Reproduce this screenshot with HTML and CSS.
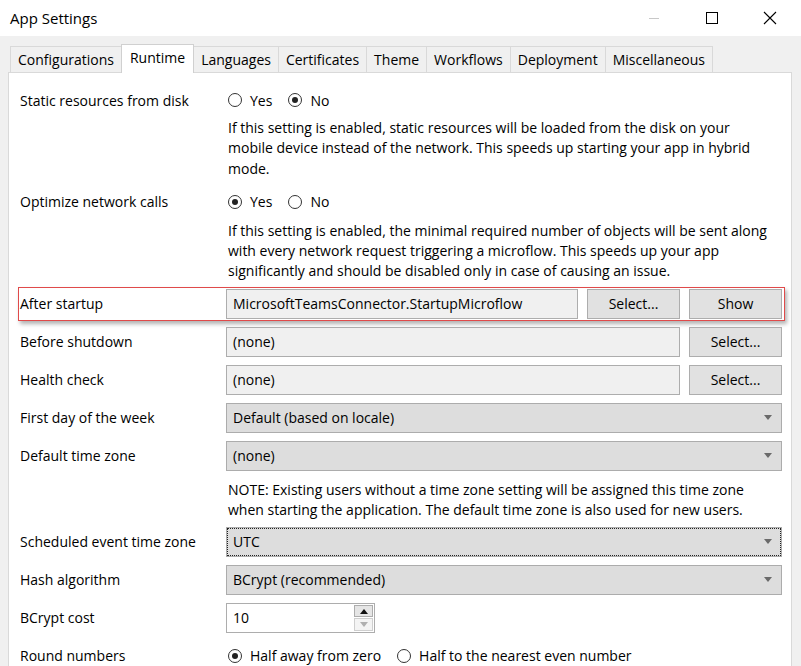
FILE: index.html
```html
<!DOCTYPE html>
<html>
<head>
<meta charset="utf-8">
<title>App Settings</title>
<link rel="stylesheet" href="styles.css">
</head>
<body>
<div class="window">
  <div class="titlebar">
    <span class="title">App Settings</span>
    <div class="winctrls">
      <span class="wbtn"><svg width="12" height="12" viewBox="0 0 12 12"><path d="M1 6.5h10" stroke="#c8c8c8" stroke-width="1"/></svg></span>
      <span class="wbtn"><svg width="12" height="12" viewBox="0 0 12 12"><rect x="0.5" y="0.5" width="11" height="11" fill="none" stroke="#000" stroke-width="1"/></svg></span>
      <span class="wbtn"><svg width="14" height="14" viewBox="0 0 14 14"><path d="M1 1L13 13M13 1L1 13" stroke="#000" stroke-width="1.1"/></svg></span>
    </div>
  </div>

  <div class="tabs">
    <div class="tab">Configurations</div>
    <div class="tab active">Runtime</div>
    <div class="tab">Languages</div>
    <div class="tab">Certificates</div>
    <div class="tab">Theme</div>
    <div class="tab">Workflows</div>
    <div class="tab">Deployment</div>
    <div class="tab">Miscellaneous</div>
  </div>

  <div class="panel">
    <div class="row r-first">
      <div class="label">Static resources from disk</div>
      <div class="radios">
        <span class="radio"><span class="dot"></span>Yes</span>
        <span class="radio checked"><span class="dot"></span>No</span>
      </div>
    </div>
    <div class="desc d-first">If this setting is enabled, static resources will be loaded from the disk on your<br>mobile device instead of the network. This speeds up starting your app in hybrid<br>mode.</div>

    <div class="row r-opt">
      <div class="label">Optimize network calls</div>
      <div class="radios">
        <span class="radio checked"><span class="dot"></span>Yes</span>
        <span class="radio"><span class="dot"></span>No</span>
      </div>
    </div>
    <div class="desc d-opt">If this setting is enabled, the minimal required number of objects will be sent along<br>with every network request triggering a microflow. This speeds up your app<br>significantly and should be disabled only in case of causing an issue.</div>

    <div class="row framed">
      <div class="label">After startup</div>
      <div class="field f-short">MicrosoftTeamsConnector.StartupMicroflow</div>
      <div class="btn">Select...</div>
      <div class="btn">Show</div>
    </div>

    <div class="row r-after-frame">
      <div class="label">Before shutdown</div>
      <div class="field f-long">(none)</div>
      <div class="btn">Select...</div>
    </div>

    <div class="row">
      <div class="label">Health check</div>
      <div class="field f-long">(none)</div>
      <div class="btn">Select...</div>
    </div>

    <div class="row">
      <div class="label">First day of the week</div>
      <div class="select">Default (based on locale)<span class="caret"></span></div>
    </div>

    <div class="row">
      <div class="label">Default time zone</div>
      <div class="select">(none)<span class="caret"></span></div>
    </div>
    <div class="desc d-note">NOTE: Existing users without a time zone setting will be assigned this time zone<br>when starting the application. The default time zone is also used for new users.</div>

    <div class="row r-sched">
      <div class="label">Scheduled event time zone</div>
      <div class="select focused">UTC<span class="caret"></span></div>
    </div>

    <div class="row">
      <div class="label">Hash algorithm</div>
      <div class="select">BCrypt (recommended)<span class="caret"></span></div>
    </div>

    <div class="row">
      <div class="label">BCrypt cost</div>
      <div class="spin">
        <span class="spin-val">10</span>
        <span class="spin-btns">
          <span class="spin-up"><span class="tri-up"></span></span>
          <span class="spin-down"><span class="tri-down"></span></span>
        </span>
      </div>
    </div>

    <div class="row">
      <div class="label">Round numbers</div>
      <div class="radios">
        <span class="radio checked"><span class="dot"></span>Half away from zero</span>
        <span class="radio"><span class="dot"></span>Half to the nearest even number</span>
      </div>
    </div>
  </div>
</div>
</body>
</html>
```

FILE: styles.css
```css
html, body {
  margin: 0;
  padding: 0;
  width: 801px;
  height: 666px;
  overflow: hidden;
}
body {
  background: #f0f0f0;
  font-family: "Open Sans", "Noto Sans", "DejaVu Sans", sans-serif;
  font-size: 14px;
  color: #000;
}
.window {
  width: 801px;
  height: 666px;
  overflow: hidden;
}
.titlebar {
  height: 36px;
  background: #fff;
  display: flex;
  align-items: center;
}
.title {
  margin-left: 10px;
  font-size: 15px;
}
.winctrls {
  margin-left: auto;
  margin-right: 2px;
  display: flex;
  align-items: center;
}
.wbtn {
  width: 58px;
  height: 36px;
  display: flex;
  align-items: center;
  justify-content: center;
}
.tabs {
  display: flex;
  align-items: flex-end;
  padding-left: 10px;
  margin-top: 8px;
  height: 28px;
}
.tab {
  height: 25px;
  line-height: 26px;
  padding: 0 7px;
  border: 1px solid #d9d9d9;
  border-bottom: none;
  margin-right: -1px;
  background: #f0f0f0;
  position: relative;
}
.tab.active {
  height: 28px;
  line-height: 25px;
  background: #fff;
  border-color: #d0d0d0;
  z-index: 2;
  margin-bottom: -1px;
  padding: 0 8px;
}
.panel {
  margin-left: 8px;
  width: 784px;
  height: 700px;
  background: #fff;
  border: 1px solid #d9d9d9;
  padding: 12px 6px 0 9px;
  box-sizing: border-box;
}
.row {
  display: flex;
  align-items: center;
  height: 30px;
  margin-top: 8px;
  padding: 0 3px 0 2px;
}
.row.r-first { margin-top: 0; }
.row.r-opt { margin-top: 8px; }
.row.r-after-frame { margin-top: 6px; }
.row.r-sched { margin-top: 7px; }
.label {
  width: 206px;
  flex: none;
}
.framed {
  height: 30px;
  margin-top: 5px;
  border: 1px solid #e04a4a;
  padding: 1px 2px 1px 1px;
  box-shadow: 2px 3px 4px rgba(0, 0, 0, 0.3);
}
.desc {
  margin-left: 210px;
  line-height: 20.3px;
}
.d-first { margin-top: 3px; }
.d-opt { margin-top: 4px; }
.d-note { margin-top: 9px; line-height: 20px; }
.radios {
  display: flex;
  align-items: center;
}
.radio {
  display: inline-flex;
  align-items: center;
  margin-right: 14px;
}
.dot {
  width: 12px;
  height: 12px;
  border: 1px solid #333;
  border-radius: 50%;
  margin: 0 8px 0 2px;
  position: relative;
  box-sizing: content-box;
}
.radio.checked .dot::after {
  content: "";
  position: absolute;
  left: 3px;
  top: 3px;
  width: 6px;
  height: 6px;
  border-radius: 50%;
  background: #222;
}
.field {
  height: 30px;
  line-height: 28px;
  box-sizing: border-box;
  border: 1px solid #adadad;
  background: #f0f0f0;
  padding-left: 6px;
  flex: none;
}
.f-short { width: 352px; }
.f-long { width: 454px; }
.btn {
  width: 93px;
  height: 30px;
  line-height: 28px;
  box-sizing: border-box;
  border: 1px solid #adadad;
  background: #e1e1e1;
  text-align: center;
  margin-left: 9px;
  flex: none;
}
.select {
  flex: 1;
  height: 30px;
  line-height: 28px;
  box-sizing: border-box;
  border: 1px solid #acacac;
  background: #dddddd;
  padding-left: 6px;
  display: flex;
  align-items: center;
}
.select.focused {
  outline: 1px dotted #222;
  outline-offset: -2px;
}
.caret {
  margin-left: auto;
  margin-right: 9px;
  width: 0;
  height: 0;
  border-left: 4px solid transparent;
  border-right: 4px solid transparent;
  border-top: 5px solid #6a6a6a;
}
.spin {
  width: 149px;
  height: 30px;
  box-sizing: border-box;
  border: 1px solid #adadad;
  background: #fff;
  display: flex;
  align-items: stretch;
}
.spin-val {
  flex: 1;
  padding-left: 6px;
  line-height: 28px;
}
.spin-btns {
  width: 19px;
  display: flex;
  flex-direction: column;
  padding: 1px 1px 1px 0;
  gap: 1px;
}
.spin-up, .spin-down {
  flex: 1;
  display: flex;
  align-items: center;
  justify-content: center;
  border: 1px solid #adadad;
  background: #e5e5e5;
}
.spin-down {
  background: #f4f4f4;
  border-color: #cfcfcf;
}
.tri-up {
  width: 0;
  height: 0;
  border-left: 4px solid transparent;
  border-right: 4px solid transparent;
  border-bottom: 5px solid #111;
}
.tri-down {
  width: 0;
  height: 0;
  border-left: 4px solid transparent;
  border-right: 4px solid transparent;
  border-top: 5px solid #b0b0b0;
}
```
